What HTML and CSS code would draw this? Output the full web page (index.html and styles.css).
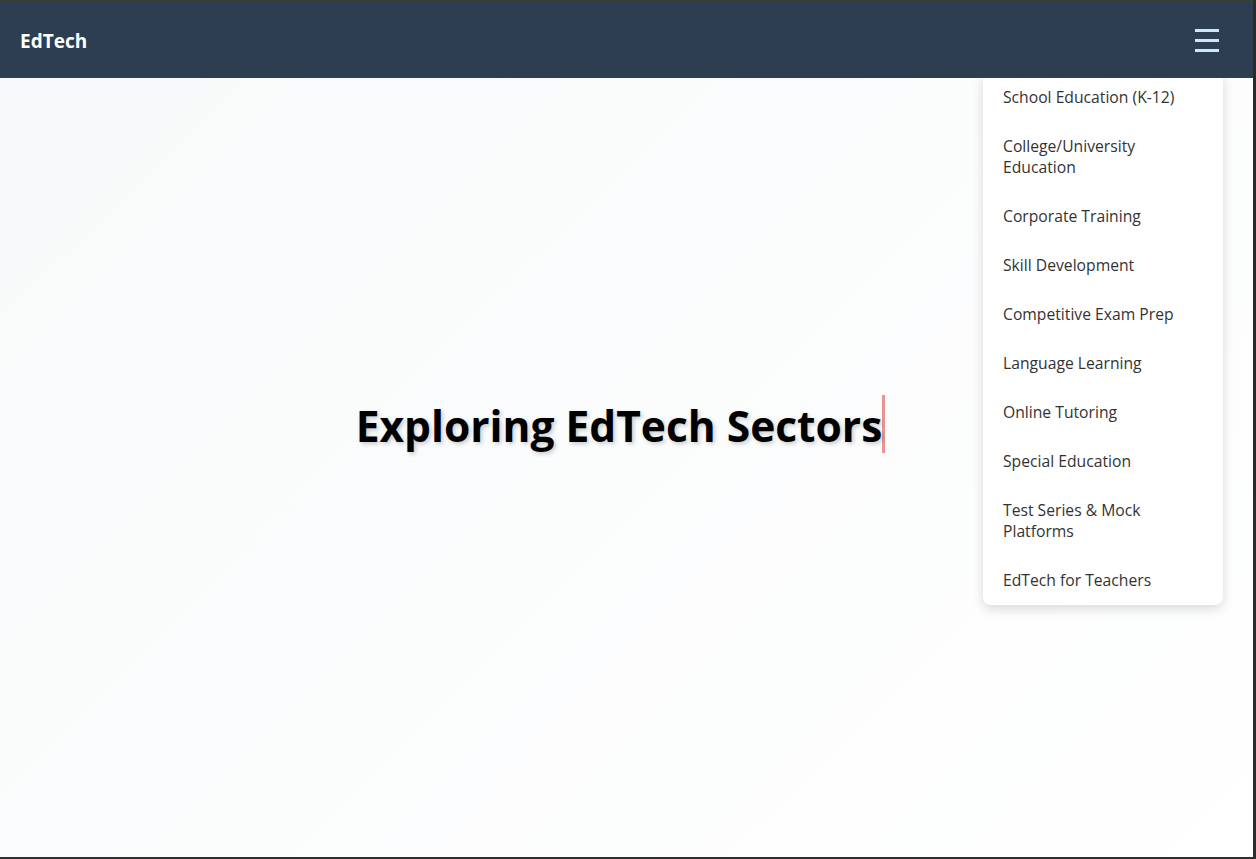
FILE: index.html
```html
<!DOCTYPE html>
<html lang="en">
<head>
<meta charset="utf-8">
<title>EdTech</title>
<link rel="stylesheet" href="styles.css">
</head>
<body>
<div class="screen">
  <header class="navbar">
    <div class="logo">EdTech</div>
    <button class="menu-btn" aria-label="Menu">
      <span></span><span></span><span></span>
    </button>
  </header>
  <ul class="dropdown">
    <li>School Education (K-12)</li>
    <li>College/University Education</li>
    <li>Corporate Training</li>
    <li>Skill Development</li>
    <li>Competitive Exam Prep</li>
    <li>Language Learning</li>
    <li>Online Tutoring</li>
    <li>Special Education</li>
    <li>Test Series &amp; Mock Platforms</li>
    <li>EdTech for Teachers</li>
  </ul>
  <main class="hero">
    <h1 class="title">Exploring EdTech Sectors</h1>
  </main>
</div>
</body>
</html>
```
FILE: styles.css
```css
* { box-sizing: border-box; }
html, body { margin: 0; padding: 0; }
body {
  font-family: "Open Sans", "Noto Sans", sans-serif;
  background: #2d2d2d;
}
.screen {
  position: relative;
  width: 1256px;
  height: 859px;
  border-top: 1px solid #3a3d30;
  border-right: 3px solid #2b2b2b;
  border-bottom: 2px solid #2f2f2f;
  background: linear-gradient(135deg, #f7f9fa 0%, #ffffff 100%);
  display: flex;
  flex-direction: column;
  overflow: hidden;
}
.navbar {
  position: relative;
  z-index: 2;
  height: 77px;
  flex: none;
  background: #2c3e50;
  display: flex;
  align-items: center;
  justify-content: space-between;
  padding: 1px 34px 0 20px;
}
.logo {
  color: #ffffff;
  font-weight: 700;
  font-size: 19px;
  padding-top: 2px;
}
.menu-btn {
  background: none;
  border: none;
  padding: 0;
  width: 24px;
  height: 23px;
  display: flex;
  flex-direction: column;
  justify-content: space-between;
  cursor: pointer;
}
.menu-btn span {
  display: block;
  height: 3px;
  width: 24px;
  background: #cde8f5;
}
.dropdown {
  position: absolute;
  z-index: 1;
  top: 72px;
  right: 30px;
  width: 240px;
  margin: 0;
  padding: 0;
  list-style: none;
  background: #ffffff;
  border-radius: 8px;
  box-shadow: 0 4px 12px rgba(0, 0, 0, 0.15);
}
.dropdown li {
  padding: 14px 20px;
  font-size: 15.7px;
  line-height: 21px;
  color: #333333;
  font-weight: 500;
}
.hero {
  flex: 1;
  display: flex;
  align-items: center;
  justify-content: center;
  padding-bottom: 88px;
}
.title {
  margin: 0;
  padding-top: 4px;
  font-size: 42.5px;
  font-weight: 700;
  color: #000;
  line-height: 54px;
  border-right: 3px solid #e89494;
  text-shadow: 2px 2px 4px rgba(0, 0, 0, 0.2);
  white-space: nowrap;
  transform: translateX(-6px);
}
```
